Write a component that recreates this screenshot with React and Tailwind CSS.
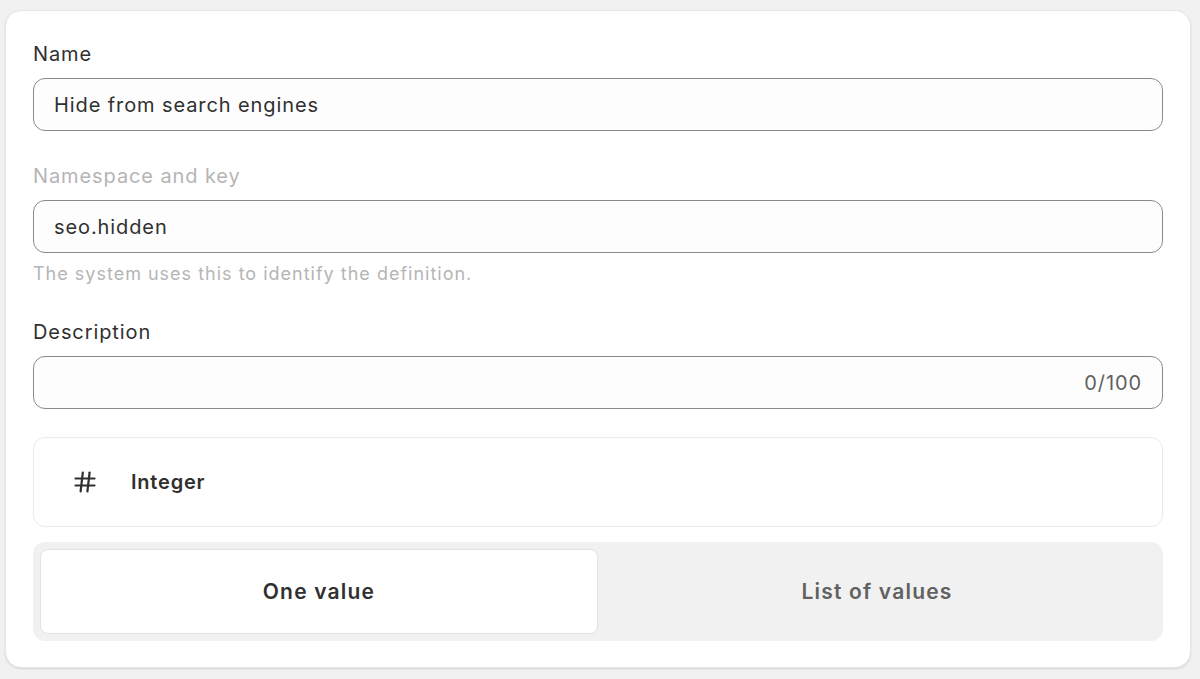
import { useState } from 'react';

function HashIcon() {
  return (
    <svg width="24" height="24" viewBox="0 0 24 24" fill="none" stroke="#303030" strokeWidth="2.2" strokeLinecap="round">
      <path d="M2.5 8.5h19" />
      <path d="M2.5 15.5h19" />
      <path d="M9.8 2.5L7.6 21.5" />
      <path d="M16.6 2.5L14.4 21.5" />
    </svg>
  );
}

function Label({ children, muted }) {
  return (
    <label className={`block text-[20px] leading-6 mb-3 tracking-[0.9px] ${muted ? 'text-[#b5b5b5]' : 'text-[#303030]'}`}>
      {children}
    </label>
  );
}

const field = 'h-[53px] rounded-[12px] border border-[#8a8a8a] bg-[#fdfdfd] flex items-center px-5 text-[20px] tracking-[0.9px]';

export default function App() {
  const [mode, setMode] = useState('one');

  return (
    <div className="min-h-screen bg-[#f1f1f1] pt-[10px] pl-[5px] pr-[9px] pb-[10px]" style={{ fontFamily: 'Inter, "Noto Sans", sans-serif' }}>
      <div className="bg-white rounded-[16px] border border-[#e6e6e6] shadow-[0_1px_2px_rgba(0,0,0,0.12)] px-[27px] pt-[31px] pb-[26px]">
        <Label>Name</Label>
        <div className={`${field} text-[#303030]`}>Hide from search engines</div>

        <div className="mt-[33px]">
          <Label muted>Namespace and key</Label>
          <div className={`${field} text-[#303030]`}>seo.hidden</div>
          <p className="mt-[9px] text-[18px] leading-6 tracking-[1px] text-[#b5b5b5]">The system uses this to identify the definition.</p>
        </div>

        <div className="mt-[34px]">
          <Label>Description</Label>
          <div className={`${field} justify-end text-[#616161]`}>0/100</div>
        </div>

        <div className="mt-[28px] h-[90px] rounded-[12px] border border-[#ebebeb] flex items-center pl-[39px] pr-5 gap-[34px]">
          <HashIcon />
          <span className="text-[20px] font-semibold tracking-[0.8px] text-[#303030]">Integer</span>
        </div>

        <div className="mt-[15px] rounded-[12px] bg-[#f1f1f1] p-[7px] grid grid-cols-2 h-[99px]">
          <button
            onClick={() => setMode('one')}
            className={`rounded-[8px] text-[21px] font-semibold tracking-[1.2px] ${mode === 'one' ? 'bg-white border border-[#e3e3e3] text-[#303030]' : 'text-[#616161]'}`}
          >
            One value
          </button>
          <button
            onClick={() => setMode('list')}
            className={`rounded-[8px] text-[21px] font-semibold tracking-[1.2px] ${mode === 'list' ? 'bg-white border border-[#e3e3e3] text-[#303030]' : 'text-[#616161]'}`}
          >
            List of values
          </button>
        </div>
      </div>
    </div>
  );
}
